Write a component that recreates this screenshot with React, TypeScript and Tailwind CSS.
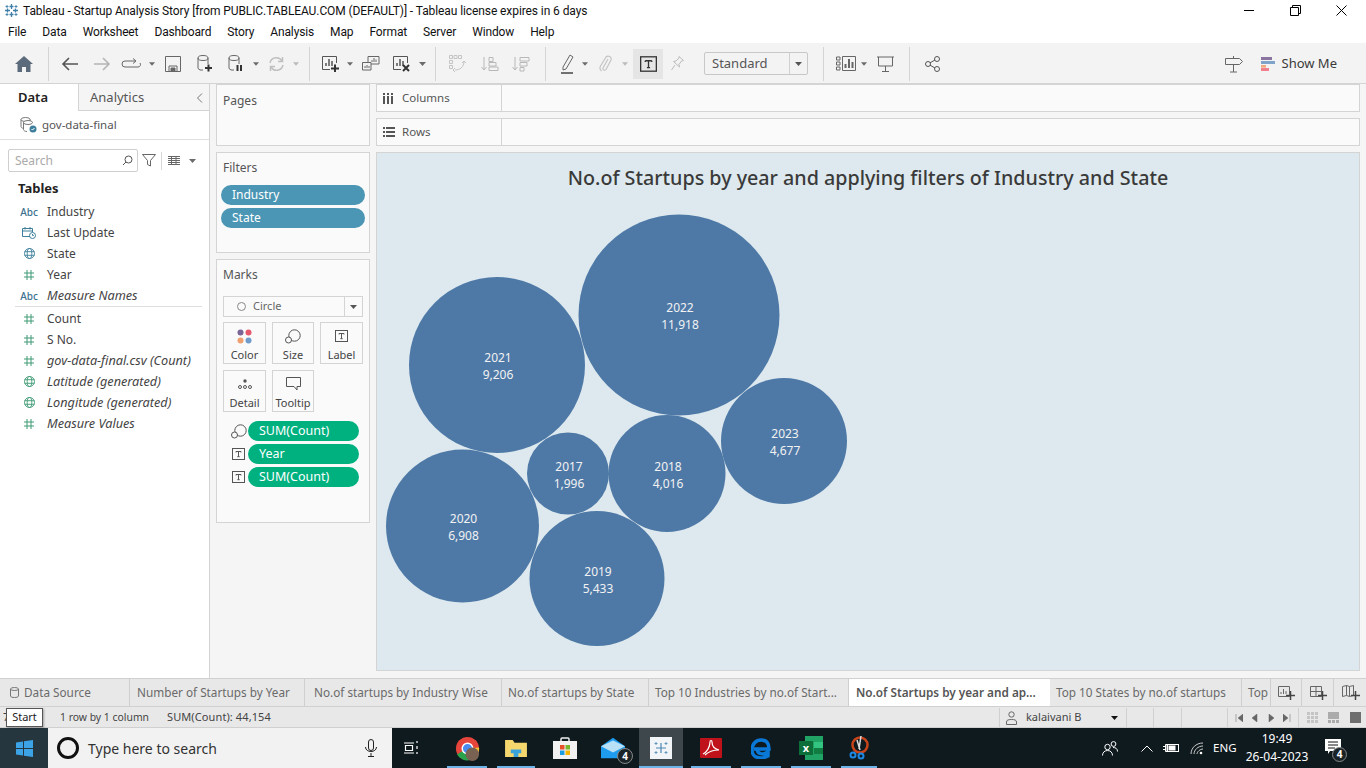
import React from 'react';

const FONT = "font-['Noto_Sans',sans-serif]";

const Caret = ({ color = '#6b6b6b' }: { color?: string }) => (
  <svg width="7" height="4" viewBox="0 0 7 4"><path d="M0 0h7L3.5 4z" fill={color} /></svg>
);

const Cell = ({ className, children }: { className: string; children?: React.ReactNode }) => (
  <div className={`flex flex-none items-center justify-center ${className}`}>{children}</div>
);

const Sep = () => <div className="h-[34px] w-px flex-none bg-[#d4d4d4]" />;

const TBox = ({ size = 13, color = '#555' }: { size?: number; color?: string }) => (
  <svg width={size} height={size - 1} viewBox="0 0 13 12" fill="none">
    <rect x="0.5" y="0.5" width="12" height="11" stroke={color} />
    <path d="M4 3.5h5M6.5 3.5v5.2M5.3 8.7h2.4M4 3.5v1M9 3.5v1" stroke={color} />
  </svg>
);

const SizeIcon = ({ color = '#555' }: { color?: string }) => (
  <svg width="16" height="15" viewBox="0 0 16 15" fill="none">
    <circle cx="9.5" cy="6.5" r="5.7" stroke={color} />
    <circle cx="3.5" cy="11" r="3" fill="#fafafa" stroke={color} />
  </svg>
);

const Hash = ({ color = '#3f9a74' }: { color?: string }) => (
  <svg width="10" height="10" viewBox="0 0 10 10" fill="none" stroke={color}>
    <path d="M3 0v10M7 0v10M0 3h10M0 7h10" />
  </svg>
);

const Globe = ({ color = '#3d7f9c' }: { color?: string }) => (
  <svg width="11" height="11" viewBox="0 0 11 11" fill="none" stroke={color} strokeWidth="0.9">
    <circle cx="5.5" cy="5.5" r="5" />
    <ellipse cx="5.5" cy="5.5" rx="2.3" ry="5" />
    <path d="M0.6 3.7h9.8M0.6 7.3h9.8" />
  </svg>
);

const Abc = () => <span className="text-[10px] font-medium leading-none text-[#3d7290]">Abc</span>;

const Cal = () => (
  <svg width="14" height="13" viewBox="0 0 14 13" fill="none" stroke="#3d7f9c">
    <path d="M8 10.5H.5v-8h10V6M.5 5h10M3 1v2.5M8 1v2.5" />
    <circle cx="10.5" cy="9.5" r="3" />
    <path d="M10.5 8v1.5h1.3" />
  </svg>
);

const fields: { icon: React.ReactNode; label: string; italic?: boolean; divider?: boolean }[] = [
  { icon: <Abc />, label: 'Industry' },
  { icon: <Cal />, label: 'Last Update' },
  { icon: <Globe />, label: 'State' },
  { icon: <Hash />, label: 'Year' },
  { icon: <Abc />, label: 'Measure Names', italic: true, divider: true },
  { icon: <Hash />, label: 'Count' },
  { icon: <Hash />, label: 'S No.' },
  { icon: <Hash />, label: 'gov-data-final.csv (Count)', italic: true },
  { icon: <Globe color="#3f9a74" />, label: 'Latitude (generated)', italic: true },
  { icon: <Globe color="#3f9a74" />, label: 'Longitude (generated)', italic: true },
  { icon: <Hash />, label: 'Measure Values', italic: true },
];

const bubbles = [
  { year: '2022', value: '11,918', cx: 679, cy: 315, r: 100.5 },
  { year: '2021', value: '9,206', cx: 497, cy: 365, r: 88 },
  { year: '2023', value: '4,677', cx: 784, cy: 441, r: 63 },
  { year: '2018', value: '4,016', cx: 667, cy: 473.5, r: 58.5 },
  { year: '2017', value: '1,996', cx: 568, cy: 473.5, r: 41 },
  { year: '2020', value: '6,908', cx: 462.5, cy: 526, r: 76.5 },
  { year: '2019', value: '5,433', cx: 597, cy: 578.5, r: 67.5 },
];

const TitleBar = () => (
  <div className="flex h-[21px] flex-none items-center bg-white">
    <Cell className="ml-[3px] w-[16px]">
      <svg width="15" height="15" viewBox="0 0 15 15" stroke="#3f7fa8" strokeWidth="1.3">
        <path d="M7.5 1v5M5.500 3.500h4M7.500 9v5M5.500 11.500h4M1 7.500h5M3.500 5.500v4M9 7.500h5M11.500 5.500v4" />
        <path d="M3 2v3M1.500 3.500h3M12 2v3M10.500 3.500h3M3 10v3M1.500 11.500h3M12 10v3M10.500 11.500h3" strokeWidth="0.9" />
      </svg>
    </Cell>
    <span className="ml-[4px] font-['Roboto',sans-serif] text-[12px] tracking-[-0.09px] text-[#111]">
      Tableau - Startup Analysis Story [from PUBLIC.TABLEAU.COM (DEFAULT)] - Tableau license expires in 6 days
    </span>
    <div className="ml-auto mr-[2px] flex h-full items-center">
      <Cell className="w-[46px]"><div className="h-px w-[10px] bg-black" /></Cell>
      <Cell className="w-[46px]">
        <svg width="11" height="11" viewBox="0 0 11 11" fill="none" stroke="#000"><path d="M.5 2.5h8v8h-8zM2.5 2.5v-2h8v8h-2" /></svg>
      </Cell>
      <Cell className="w-[46px]">
        <svg width="11" height="11" viewBox="0 0 11 11" stroke="#000"><path d="M.5.5l10 10M10.5.5l-10 10" /></svg>
      </Cell>
    </div>
  </div>
);

const MenuBar = () => (
  <div className="flex h-[22px] flex-none items-center gap-[16px] bg-white pl-[8px] font-['Roboto',sans-serif] text-[12px] tracking-[-0.13px] text-[#111]">
    {['File', 'Data', 'Worksheet', 'Dashboard', 'Story', 'Analysis', 'Map', 'Format', 'Server', 'Window', 'Help'].map((m) => (
      <span key={m}>{m}</span>
    ))}
  </div>
);

const Toolbar = () => (
  <div className="flex h-[41px] flex-none items-center border-b border-[#d4d4d4] bg-[#f3f3f3] pt-[1px]">
    <Cell className="w-[48px]">
      <svg width="18" height="16" viewBox="0 0 18 16"><path d="M9 0L0 8h2.5v8h4.5v-5h4v5h4.500V8H18z" fill="#5b6b7b" /></svg>
    </Cell>
    <Sep />
    <Cell className="w-[42px]">
      <svg width="18" height="14" viewBox="0 0 18 14" fill="none" stroke="#555" strokeWidth="1.6"><path d="M17 7H2M8 1L2 7l6 6" /></svg>
    </Cell>
    <Cell className="w-[22px]">
      <svg width="18" height="14" viewBox="0 0 18 14" fill="none" stroke="#b5b5b5" strokeWidth="1.6"><path d="M1 7h15M10 1l6 6-6 6" /></svg>
    </Cell>
    <Cell className="w-[36px]">
      <svg width="20" height="12" viewBox="0 0 20 12" fill="none" stroke="#666"><path d="M14 3H4a3 3 0 0 0 0 6h13a2.500 2.500 0 0 0 2-4" /><path d="M12 .5L15 3l-3 2.500" /></svg>
    </Cell>
    <Cell className="w-[6px]"><Caret /></Cell>
    <Cell className="w-[36px]">
      <svg width="16" height="16" viewBox="0 0 16 16" fill="none" stroke="#666"><path d="M.5.5h15v15H.5z" /><path d="M4 15.500V10h8v5.500" /><path d="M6 12h4v3H6z" fill="#666" /></svg>
    </Cell>
    <Cell className="w-[28px]">
      <svg width="16" height="17" viewBox="0 0 16 17" fill="none" stroke="#666"><ellipse cx="6" cy="3" rx="5" ry="2.500" /><path d="M1 3v10.500l2 1.500h3M11 3v6" /><path d="M8 13h7M11.500 9.500v7" stroke="#333" strokeWidth="2" /></svg>
    </Cell>
    <Cell className="w-[34px]">
      <svg width="16" height="17" viewBox="0 0 16 17" fill="none" stroke="#666"><ellipse cx="6" cy="3" rx="5" ry="2.500" /><path d="M1 3v10.500l2 1.500h3M11 3v6" /><path d="M9.500 10v6M13 10v6" stroke="#333" strokeWidth="2" /></svg>
    </Cell>
    <Cell className="w-[6px]"><Caret /></Cell>
    <Cell className="w-[34px]">
      <svg width="17" height="16" viewBox="0 0 17 16" fill="none" stroke="#c0c0c0" strokeWidth="1.500"><path d="M2 7a6.500 6.500 0 0 1 12-2M15 9a6.500 6.500 0 0 1-12 2" /><path d="M14.500 1v4.500H10M2.500 15v-4.500H7" /></svg>
    </Cell>
    <Cell className="w-[6px]"><Caret color="#bbb" /></Cell>
    <div className="w-[10px] flex-none" />
    <Sep />
    <Cell className="w-[37px] pl-[3px]">
      <svg width="17" height="17" viewBox="0 0 17 17" fill="none" stroke="#555"><path d="M8 14.500H.5v-13h14V8" /><path d="M4 11V8M7 11V4M10 11V6" strokeWidth="1.500" /><path d="M9 13.500h8M13 9.500v7.500" stroke="#333" strokeWidth="2" /></svg>
    </Cell>
    <Cell className="w-[6px]"><Caret /></Cell>
    <Cell className="w-[36px]">
      <svg width="18" height="17" viewBox="0 0 18 17" fill="none" stroke="#666"><path d="M6 10V1.500h11V9H9" /><path d="M10 7V5M12 7V3M14 7V4.500" /><path d="M.5 7.500H9V15H.5z" fill="#f3f3f3" /><path d="M3 13v-2M5 13V10M7 13v-2" /></svg>
    </Cell>
    <Cell className="w-[26px]">
      <svg width="18" height="17" viewBox="0 0 18 17" fill="none" stroke="#555"><path d="M8 14.500H.5v-13h14V8" /><path d="M4 11V8M7 11V4M10 11V6" strokeWidth="1.500" /><path d="M10 10l6 6M16 10l-6 6" stroke="#333" strokeWidth="2" /></svg>
    </Cell>
    <Cell className="w-[14px]"><Caret /></Cell>
    <div className="w-[6px] flex-none" />
    <Sep />
    <Cell className="w-[42px]">
      <svg width="17" height="17" viewBox="0 0 17 17" fill="none" stroke="#c4c4c4"><path d="M.5.5h3v3h-3zM5 .5h3v3H5zM9.500.5h3v3h-3zM.5 5.500h3v3h-3zM.5 10.500h3v3h-3z" /><path d="M6 15c5 0 9-3 9-9M13 8l2-2 2 2M6 13l-2 2 2 2" /></svg>
    </Cell>
    <Cell className="w-[24px]">
      <svg width="18" height="16" viewBox="0 0 18 16" fill="none" stroke="#b8b8b8"><path d="M3 1v13M.5 11L3 14l2.500-3" /><path d="M8 1.500h4v4H8zM8 6.500h7v3.500H8zM8 11h9v3.500H8z" /></svg>
    </Cell>
    <Cell className="w-[38px]">
      <svg width="18" height="16" viewBox="0 0 18 16" fill="none" stroke="#b8b8b8"><path d="M3 1v13M.5 11L3 14l2.500-3" /><path d="M8 1.500h9V5H8zM8 6.500h7V10H8zM8 11.500h4v3.500H8z" /></svg>
    </Cell>
    <div className="w-[5px] flex-none" />
    <Sep />
    <Cell className="w-[36px] pl-[8px]">
      <svg width="14" height="20" viewBox="0 0 14 20" fill="none" stroke="#666"><path d="M2 13L9 1l3 2-7 12-3 1z" /><path d="M0 19h12" stroke="#444" strokeWidth="1.500" /></svg>
    </Cell>
    <Cell className="w-[6px]"><Caret /></Cell>
    <Cell className="w-[34px]">
      <svg width="13" height="17" viewBox="0 0 13 17" fill="none" stroke="#c4c4c4"><path d="M9 4L4 13a1.700 1.700 0 0 0 3 1.500L12 5a3 3 0 0 0-5-3L1.500 11a4 4 0 0 0 1 5" strokeWidth="1.200" /></svg>
    </Cell>
    <Cell className="w-[6px]"><Caret color="#bbb" /></Cell>
    <Cell className="ml-[5px] h-[30px] w-[30px] bg-[#e5e5e5]"><TBox size={17} color="#333" /></Cell>
    <Cell className="w-[28px]">
      <svg width="13" height="15" viewBox="0 0 13 15" fill="none" stroke="#bbb"><path d="M8 .5l4.500 4-2 .5-2.500 3.500.5 2.500-6-5.500 2.500-.5 3-3zM4 9l-3.500 5" /></svg>
    </Cell>
    <div className="ml-[13px] flex h-[23px] w-[104px] flex-none items-center rounded-[2px] border border-[#c8c8c8] pl-[7px] text-[13px] text-[#555]">
      <span className="flex-1">Standard</span>
      <div className="flex h-full w-[18px] items-center justify-center border-l border-[#d0d0d0]"><Caret color="#555" /></div>
    </div>
    <div className="w-[15px] flex-none" />
    <Sep />
    <Cell className="ml-[12px] w-[20px]">
      <svg width="20" height="15" viewBox="0 0 20 15" fill="none" stroke="#666"><path d="M.5 1h3.500v3H.500zM.5 6h3.500v3H.500zM.5 11h3.500v3H.500zM6.500.5h13v14h-13z" /><path d="M9.500 12V8M13 12V3M16.500 12V6" strokeWidth="2" /></svg>
    </Cell>
    <Cell className="ml-[5px] w-[6px]"><Caret /></Cell>
    <Cell className="ml-[8px] w-[20px]">
      <svg width="17" height="16" viewBox="0 0 17 16" fill="none" stroke="#666"><path d="M0 1h17M1.500 1v9h14V1M8.500 10v5M5 15.500h7" /></svg>
    </Cell>
    <div className="w-[14px] flex-none" />
    <Sep />
    <Cell className="ml-[13px] w-[18px]">
      <svg width="15" height="16" viewBox="0 0 15 16" fill="none" stroke="#555"><circle cx="3" cy="8" r="2.500" /><circle cx="12" cy="3" r="2.500" /><circle cx="12" cy="13" r="2.500" /><path d="M5 6.800l5-2.800M5 9.200l5 2.800" /></svg>
    </Cell>
    <div className="ml-auto flex items-center">
      <svg width="18" height="18" viewBox="0 0 18 18" fill="none" stroke="#666"><path d="M.5 3.500h14l3 3-3 3H.5zM8.500 1v2.500M8.500 9.500V17M5 17h7" /></svg>
      <svg width="14" height="14" viewBox="0 0 14 14" className="ml-[18px]">
        <rect y="0" width="11" height="3" fill="#8a75a0" />
        <rect y="4" width="14" height="3" fill="#7fa3c9" />
        <rect y="8" width="5" height="2.600" fill="#f0a87c" />
        <rect y="11" width="8" height="3" fill="#f2808b" />
      </svg>
      <span className="ml-[7px] mr-[29px] text-[13px] text-[#3a3a3a]">Show Me</span>
    </div>
  </div>
);

const Pill = ({ label, kind }: { label: string; kind: 'filter' | 'mark' }) => (
  <div
    className={
      kind === 'filter'
        ? 'flex h-[20px] w-[144px] items-center rounded-full bg-[#4b96b4] pl-[11px] text-[12px] text-white'
        : 'flex h-[20px] w-[111px] items-center rounded-full bg-[#00b180] pl-[11px] text-[12.5px] text-white'
    }
  >
    {label}
  </div>
);

const MarkButton = ({ icon, label }: { icon: React.ReactNode; label: string }) => (
  <div className="flex h-[42px] flex-col items-center border border-[#d4d4d4] pt-[5px]">
    <div className="flex h-[16px] items-center">{icon}</div>
    <span className="mt-[4px] text-[11px] leading-[14px] text-[#444]">{label}</span>
  </div>
);

const DataPane = () => (
  <aside className="flex w-[210px] flex-none flex-col border-r border-[#d4d4d4] bg-white">
    <div className="flex h-[27px] flex-none">
      <div className="flex w-[78px] items-center pl-[18px] text-[13px] font-semibold text-[#222]">Data</div>
      <div className="flex flex-1 items-center border-b border-l border-[#d4d4d4] bg-[#f5f5f5] pl-[11px] pt-[1px] text-[13px] text-[#555]">
        Analytics
        <svg width="7" height="10" viewBox="0 0 7 10" fill="none" stroke="#777" className="ml-auto mr-[6px]"><path d="M6 .5L1.500 5 6 9.500" /></svg>
      </div>
    </div>
    <div className="flex h-[29px] flex-none items-center border-b border-[#e0e0e0] pl-[20px]">
      <svg width="17" height="16" viewBox="0 0 17 16" fill="none" stroke="#777">
        <ellipse cx="5.500" cy="2.500" rx="4.500" ry="2" />
        <path d="M1 2.500v7c0 1 1 1.700 3 2M10 2.500v2" />
        <ellipse cx="8" cy="5.500" rx="4.500" ry="2" fill="#fff" />
        <path d="M3.500 5.500v7c0 1 1.500 2 3.500 2" />
        <circle cx="13" cy="12" r="3.500" fill="#3d7f9c" stroke="none" />
        <path d="M11.500 12l1 1 2-2" stroke="#fff" />
      </svg>
      <span className="ml-[5px] text-[11.500px] text-[#555]">gov-data-final</span>
    </div>
    <div className="flex flex-none items-center pl-[8px] pt-[9px]">
      <div className="flex h-[23px] w-[130px] items-center rounded-[2px] border border-[#cfcfcf] pl-[6px] pr-[4px] text-[12px] text-[#aaa]">
        <span className="flex-1">Search</span>
        <svg width="11" height="11" viewBox="0 0 11 11" fill="none" stroke="#555"><circle cx="6.500" cy="4.500" r="3.500" /><path d="M4 7l-3 3" /></svg>
      </div>
      <svg width="14" height="13" viewBox="0 0 14 13" fill="none" stroke="#666" className="ml-[4px]"><path d="M.5.5h13L8.500 6.500V12l-3-1.500v-4z" /></svg>
      <div className="ml-[5px] h-[18px] w-px bg-[#d8d8d8]" />
      <svg width="12" height="9" viewBox="0 0 12 9" stroke="#666" className="ml-[6px]"><path d="M0 .5h12M0 2.500h12M0 4.500h12M0 6.500h12M0 8.500h12M3.500 0v9M8 0v9" /></svg>
      <div className="ml-[9px]"><Caret /></div>
    </div>
    <div className="ml-[18px] mt-[7px] text-[13px] font-bold leading-[18px] text-[#222]">Tables</div>
    <div className="mt-[4px]">
      {fields.map((f) => (
        <React.Fragment key={f.label}>
          <div className="flex h-[21px] items-center">
            <div className="flex w-[47px] flex-none items-center justify-center pl-[11px]">{f.icon}</div>
            <span className={f.italic ? 'text-[12.7px] italic text-[#444]' : 'text-[12px] text-[#444]'}>{f.label}</span>
          </div>
          {f.divider && <div className="ml-[15px] mr-[7px] mb-[1px] h-px bg-[#dedede]" />}
        </React.Fragment>
      ))}
    </div>
  </aside>
);

const Cards = () => (
  <div className="ml-[6px] flex w-[154px] flex-none flex-col gap-[6px]">
    <div className="h-[62px] border border-[#d4d4d4] bg-[#fafafa] pl-[6px] pt-[7px] text-[12px] text-[#555]">Pages</div>
    <div className="h-[101px] border border-[#d4d4d4] bg-[#fafafa] px-[4px] pt-[7px]">
      <div className="pl-[2px] text-[12px] leading-[16px] text-[#555]">Filters</div>
      <div className="mt-[9px] flex flex-col gap-[3px]">
        <Pill label="Industry" kind="filter" />
        <Pill label="State" kind="filter" />
      </div>
    </div>
    <div className="h-[264px] border border-[#d4d4d4] bg-[#fafafa] px-[6px] pt-[7px]">
      <div className="text-[12px] leading-[16px] text-[#555]">Marks</div>
      <div className="mt-[13px] flex h-[21px] w-[140px] items-center border border-[#d4d4d4] pl-[13px] text-[11px] text-[#666]">
        <div className="h-[9px] w-[9px] rounded-full border border-[#888]" />
        <span className="ml-[7px] flex-1">Circle</span>
        <div className="flex h-full w-[18px] items-center justify-center border-l border-[#d4d4d4]"><Caret color="#555" /></div>
      </div>
      <div className="mt-[5px] grid grid-cols-[43px_42px_43px] gap-x-[6px] gap-y-[6px]">
        <MarkButton
          label="Color"
          icon={
            <svg width="15" height="15" viewBox="0 0 15 15">
              <circle cx="3.500" cy="3.500" r="3" fill="#7b6496" />
              <circle cx="11.500" cy="3.500" r="3" fill="#e6586b" />
              <circle cx="3.500" cy="11.500" r="3" fill="#f0a070" />
              <circle cx="11.500" cy="11.500" r="3" fill="#6f9ccb" />
            </svg>
          }
        />
        <MarkButton label="Size" icon={<SizeIcon />} />
        <MarkButton label="Label" icon={<TBox />} />
        <MarkButton
          label="Detail"
          icon={
            <svg width="14" height="10" viewBox="0 0 14 10" fill="none" stroke="#555">
              <circle cx="7" cy="2" r="1.700" fill="#555" stroke="none" />
              <circle cx="2" cy="8" r="1.500" /><circle cx="7" cy="8" r="1.500" /><circle cx="12" cy="8" r="1.500" />
            </svg>
          }
        />
        <MarkButton
          label="Tooltip"
          icon={
            <svg width="15" height="14" viewBox="0 0 15 14" fill="none" stroke="#555"><path d="M.5.5h14v9H11V13L8 9.500H.5z" /></svg>
          }
        />
      </div>
      <div className="ml-[6px] mt-[9px] flex flex-col gap-[3px]">
        {[
          { icon: <SizeIcon />, label: 'SUM(Count)' },
          { icon: <TBox />, label: 'Year' },
          { icon: <TBox />, label: 'SUM(Count)' },
        ].map((p, i) => (
          <div key={i} className="flex items-center">
            <div className="flex w-[19px] flex-none items-center justify-center">{p.icon}</div>
            <Pill label={p.label} kind="mark" />
          </div>
        ))}
      </div>
    </div>
  </div>
);

const Shelf = ({ icon, label }: { icon: React.ReactNode; label: string }) => (
  <div className="flex h-[28px] border border-[#d4d4d4] bg-[#fafafa]">
    <div className="flex w-[125px] flex-none items-center border-r border-[#d4d4d4] pl-[6px] text-[11.500px] text-[#555]">
      <div className="flex w-[19px] flex-none">{icon}</div>
      {label}
    </div>
  </div>
);

const View = () => (
  <div className="ml-[6px] flex w-[984px] flex-none flex-col">
    <Shelf
      label="Columns"
      icon={
        <svg width="10" height="11" viewBox="0 0 10 11" fill="#555">
          <rect y="0" width="2" height="2" /><rect x="4" y="0" width="2" height="2" /><rect x="8" y="0" width="2" height="2" />
          <rect y="3" width="2" height="8" /><rect x="4" y="3" width="2" height="8" /><rect x="8" y="3" width="2" height="8" />
        </svg>
      }
    />
    <div className="h-[6px]" />
    <Shelf
      label="Rows"
      icon={<svg width="12" height="10" viewBox="0 0 12 10" fill="#555"><rect width="2" height="2" /><rect x="3" width="9" height="2" /><rect y="4" width="2" height="2" /><rect x="3" y="4" width="9" height="2" /><rect y="8" width="2" height="2" /><rect x="3" y="8" width="9" height="2" /></svg>}
    />
    <div className="h-[6px]" />
    <div className="flex h-[519px] flex-col overflow-hidden border border-[#d4d4d4] bg-[#dde9ee]">
      <svg width="982" height="517" viewBox="377 153 982 517">
        <text x="868" y="185" textAnchor="middle" fontSize="19.7" fontWeight="500" fill="#3a3a3a" fontFamily="'Noto Sans', sans-serif">
          No.of Startups by year and applying filters of Industry and State
        </text>
        {bubbles.map((b) => (
          <g key={b.year}>
            <circle cx={b.cx} cy={b.cy} r={b.r} fill="#4e79a7" />
            <text x={b.cx + 1} y={b.cy - 3} textAnchor="middle" fontSize="12" fill="#f2f2f2" fontFamily="'Noto Sans', sans-serif">{b.year}</text>
            <text x={b.cx + 1} y={b.cy + 14} textAnchor="middle" fontSize="12" fill="#f2f2f2" fontFamily="'Noto Sans', sans-serif">{b.value}</text>
          </g>
        ))}
      </svg>
    </div>
  </div>
);

const tabs = [
  { label: 'Number of Startups by Year', w: 'w-[175px] pl-[7px]' },
  { label: 'No.of startups by Industry Wise', w: 'w-[197px] pl-[9px]' },
  { label: 'No.of startups by State', w: 'w-[147px] pl-[6px]' },
  { label: 'Top 10 Industries by no.of Start...', w: 'w-[200px] pl-[6px]' },
  { label: 'No.of Startups by year and ap...', w: 'w-[201px] pl-[7px]', active: true },
  { label: 'Top 10 States by no.of startups', w: 'w-[192px] pl-[6px]' },
];

const TabAdd = ({ children, w }: { children: React.ReactNode; w: string }) => (
  <div className={`relative flex h-full flex-none items-center justify-center border-l border-[#cfcfcf] ${w}`}>
    {children}
    <svg width="9" height="9" viewBox="0 0 9 9" stroke="#444" strokeWidth="1.500" className="absolute bottom-[6px] right-[6px]"><path d="M0 4.500h9M4.500 0v9" /></svg>
  </div>
);

const TabBar = () => (
  <div className="flex h-[29px] flex-none border-y border-[#d0d0d0] bg-[#e8e8e8] text-[11.75px] text-[#6a6a6a]">
    <div className="flex w-[130px] flex-none items-center border-r border-[#cfcfcf] pl-[10px]">
      <svg width="9" height="11" viewBox="0 0 9 11" fill="none" stroke="#777"><ellipse cx="4.500" cy="2" rx="4" ry="1.500" /><path d="M.5 2v7c0 2 8 2 8 0V2" /></svg>
      <span className="ml-[5px]">Data Source</span>
    </div>
    {tabs.map((t) => (
      <div
        key={t.label}
        className={`flex flex-none items-center overflow-hidden whitespace-nowrap ${t.w} ${
          t.active ? 'bg-white font-semibold text-[#555]' : 'border-r border-[#cfcfcf]'
        }`}
      >
        {t.label}
      </div>
    ))}
    <div className="flex w-[28px] flex-none items-center overflow-hidden pl-[6px]">Top</div>
    <TabAdd w="w-[31px]">
      <svg width="12" height="11" viewBox="0 0 12 11" fill="none" stroke="#666" className="mb-[3px] mr-[4px]"><path d="M.5.500h11v10H.5z" /><path d="M3 8V6M5.500 8V3M8 8V5" /></svg>
    </TabAdd>
    <TabAdd w="w-[32px]">
      <svg width="12" height="11" viewBox="0 0 12 11" fill="none" stroke="#666" className="mb-[3px] mr-[4px]"><path d="M.5.500h11v10H.5zM6 .5v10M.5 5.500h11" /></svg>
    </TabAdd>
    <TabAdd w="w-[33px]">
      <svg width="12" height="12" viewBox="0 0 12 12" fill="none" stroke="#666" className="mb-[3px] mr-[4px]"><path d="M.5 1.500l4-1 3 1 4-1v10l-4 1-3-1-4 1zM4.500.5v10M7.500 1.500v10" /></svg>
    </TabAdd>
  </div>
);

const StatusBar = () => (
  <div className="relative flex h-[21px] flex-none items-center border-b border-[#d0d0d0] bg-[#e8e8e8] pt-[1px] text-[11px] text-[#444]">
    <span className="absolute left-[3px] w-[3px] overflow-hidden">7</span>
    <span className="ml-[60px] text-[10.4px]">1 row by 1 column</span>
    <span className="ml-[18px] tracking-[0.1px]">SUM(Count): 44,154</span>
    <div className="ml-auto flex h-full">
      <div className="flex w-[127px] items-center border-l border-[#d0d0d0] pl-[6px]">
        <svg width="11" height="14" viewBox="0 0 11 14" fill="none" stroke="#666"><circle cx="5.500" cy="3.500" r="2.700" /><path d="M.5 13.500V11c0-2 2-2.500 5-2.500s5 .5 5 2.500v2.500z" /></svg>
        <span className="ml-[9px] flex-1">kalaivani B</span>
        <div className="mr-[8px]"><Caret color="#111" /></div>
      </div>
      <div className="w-[27px] border-l border-[#d0d0d0]" />
      <div className="w-[28px] border-l border-[#d0d0d0]" />
      <div className="w-[46px] border-l border-[#d0d0d0]" />
      <div className="flex w-[71px] items-center justify-around border-l border-[#d0d0d0] px-[3px]">
        {['M1 0v8M8 0v8L3 4z', 'M6 0v8L1 4z', 'M2 0v8l5-4z', 'M7 0v8M0 0v8l5-4z'].map((d) => (
          <svg key={d} width="8" height="8" viewBox="0 0 8 8" fill="#666" stroke="#666" strokeWidth="0.5"><path d={d} /></svg>
        ))}
      </div>
      <div className="flex w-[68px] items-center justify-around border-l border-[#d0d0d0] pl-[3px]">
        <svg width="11" height="11" viewBox="0 0 11 11" fill="#c4c4c4"><path d="M0 0h3v3H0zM4 0h3v3H4zM8 0h3v3H8zM0 4h3v3H0zM4 4h3v3H4zM8 4h3v3H8zM0 8h3v3H0zM4 8h3v3H4zM8 8h3v3H8z" /></svg>
        <svg width="11" height="11" viewBox="0 0 11 11" fill="#ababab"><path d="M0 0h11v7H0zM0 8h3v3H0zM4 8h3v3H4zM8 8h3v3H8z" /></svg>
        <div className="h-[11px] w-[11px] bg-[#6e6e6e]" />
      </div>
    </div>
    <div className="absolute left-[6px] top-[1px] flex h-[19px] w-[37px] items-center justify-center border border-[#555] bg-white text-[11px] text-[#222] shadow-[1px_1px_2px_rgba(0,0,0,0.3)]">
      Start
    </div>
  </div>
);

const TaskIcon = ({ w, active, children }: { w: string; active?: boolean; children: React.ReactNode }) => (
  <div className={`relative flex h-full flex-none items-center justify-center ${w}`}>
    {children}
    {active && <div className="absolute bottom-0 left-[5px] right-[5px] h-[2px] bg-[#6db3e8]" />}
  </div>
);

const Taskbar = () => (
  <div className="flex h-[40px] flex-none items-center bg-[#0f1a1f] text-white">
    <div className="flex h-full w-[48px] flex-none items-center justify-center bg-[#25363f]">
      <svg width="17" height="17" viewBox="0 0 17 17" fill="#3ba3e6"><path d="M0 2.500L7 1.500V8H0zM8 1.300L17 0v8H8zM0 9h7v6.500L0 14.500zM8 9h9v8l-9-1.300z" /></svg>
    </div>
    <div className="flex h-full w-[344px] flex-none items-center bg-[#f2f2f2] pl-[9px] text-[#222]">
      <div className="h-[22px] w-[22px] rounded-full border-[3px] border-[#111]" />
      <span className="ml-[9px] flex-1 pt-[1px] text-[14px] text-[#333]">Type here to search</span>
      <svg width="12" height="18" viewBox="0 0 12 18" fill="none" stroke="#222" className="mr-[15px]"><rect x="3.500" y=".5" width="5" height="11" rx="2.500" /><path d="M.5 8c0 6 11 6 11 0M6 14v3M3 17.500h6" /></svg>
    </div>
    <TaskIcon w="w-[38px]">
      <svg width="16" height="16" viewBox="0 0 16 16" fill="none" stroke="#fff"><path d="M1 3h10M1 13h10M2.500 5.500h7v5h-7zM14 1v2M14 6v3M14 12v2" strokeWidth="1.200" /></svg>
    </TaskIcon>
    <div className="w-[12px] flex-none" />
    <TaskIcon w="w-[50px]" active>
      <svg width="25" height="25" viewBox="0 0 26 26">
        <circle cx="13" cy="13" r="12" fill="#e5453a" />
        <path d="M13 13L2 19a12 12 0 0 0 14 6z" fill="#2ba24c" />
        <path d="M13 13l3 12a12 12 0 0 0 9-13z" fill="#f7c533" />
        <circle cx="13" cy="13" r="5.500" fill="#4a8bf0" stroke="#fff" strokeWidth="1.500" />
        <circle cx="18" cy="19" r="7" fill="#7a6253" />
      </svg>
    </TaskIcon>
    <TaskIcon w="w-[48px]" active>
      <svg width="22" height="19" viewBox="0 0 23 20"><path d="M0 1h8l2 3h13v15H0z" fill="#f5d76e" /><path d="M6 11h11v4h-3v4H9v-4H6z" fill="#3ba3dc" /></svg>
    </TaskIcon>
    <TaskIcon w="w-[49px]">
      <svg width="24" height="24" viewBox="0 0 24 24"><path d="M8 6V3a1 1 0 0 1 1-1h6a1 1 0 0 1 1 1v3" fill="none" stroke="#eee" strokeWidth="1.500" /><rect y="5" width="24" height="18" fill="#f2f2f2" /><rect x="7" y="9" width="4.500" height="4.500" fill="#e8502a" /><rect x="12.500" y="9" width="4.500" height="4.500" fill="#79b82b" /><rect x="7" y="14.500" width="4.500" height="4.500" fill="#1f9be0" /><rect x="12.500" y="14.500" width="4.500" height="4.500" fill="#f7b500" /></svg>
    </TaskIcon>
    <TaskIcon w="w-[50px]">
      <div className="relative h-[22px] w-[26px]">
        <svg width="24" height="22" viewBox="0 0 26 22"><path d="M0 9L13 0l13 9v13H0z" fill="#1d9cf0" /><path d="M0 9l13 7 13-7-13-6z" fill="#b8e0f7" /></svg>
        <div className="absolute bottom-[-5px] right-[-6px] flex h-[16px] w-[16px] items-center justify-center rounded-full border border-[#888] bg-[#1a2428] text-[10px] font-bold">4</div>
      </div>
    </TaskIcon>
    <div className="relative flex h-full w-[44px] flex-none items-center justify-center bg-[#3e474c]">
      <div className="flex h-[22px] w-[22px] items-center justify-center bg-[#f2f5f7]">
        <svg width="18" height="18" viewBox="0 0 18 18" stroke="#4a87b3" strokeWidth="1.200"><path d="M9 4v10M4 9h10" /><path d="M4 3v3M2.500 4.500h3M14 3v3M12.500 4.500h3M4 12v3M2.500 13.500h3M14 12v3M12.500 13.500h3" strokeWidth="0.800" /></svg>
      </div>
      <div className="absolute bottom-0 left-0 right-0 h-[2px] bg-[#6db3e8]" />
    </div>
    <div className="w-[3px] flex-none" />
    <TaskIcon w="w-[50px]" active>
      <svg width="22" height="20" viewBox="0 0 22 20"><rect width="22" height="20" rx="1" fill="#c0121a" /><path d="M3 16c4-2 7-7 7-12 0-2 2-2 2 0 0 4 3 7 7 8-5 0-10 1-14 5" fill="none" stroke="#fff" strokeWidth="1.200" /></svg>
    </TaskIcon>
    <TaskIcon w="w-[50px]" active>
      <svg width="21" height="21" viewBox="0 0 21 21" fill="none"><path d="M3 11h15c0-6-3-9-8-9S1 6 1 12c0 6 5 8 9 8 3 0 5-1 7-2v-4c-3 2-10 4-11-3" stroke="#0a78d7" strokeWidth="3.500" /></svg>
    </TaskIcon>
    <TaskIcon w="w-[50px]" active>
      <svg width="24" height="24" viewBox="0 0 24 24"><rect x="6" width="18" height="24" fill="#21a366" /><rect x="15" y="6" width="9" height="6" fill="#33c481" /><rect x="15" y="12" width="9" height="6" fill="#107c41" /><rect y="5" width="14" height="14" fill="#0e6e3a" /><text x="7" y="16" textAnchor="middle" fontSize="11" fontWeight="700" fill="#fff" fontFamily="'Noto Sans', sans-serif">x</text></svg>
    </TaskIcon>
    <TaskIcon w="w-[46px]" active>
      <svg width="20" height="24" viewBox="0 0 20 24" fill="none"><circle cx="11" cy="9" r="7.500" stroke="#c8441b" strokeWidth="2.500" /><path d="M12 0l-2 13M8 4l3 10" stroke="#ddd" strokeWidth="1.500" /><circle cx="4" cy="19" r="2.500" stroke="#1e88e5" strokeWidth="2" /><circle cx="12" cy="20" r="2.500" stroke="#1e88e5" strokeWidth="2" /></svg>
    </TaskIcon>
    <div className="ml-auto flex h-full items-center">
      <svg width="16" height="15" viewBox="0 0 16 15" fill="none" stroke="#fff"><circle cx="5.500" cy="6" r="2.700" /><path d="M.5 14.500c0-3 2-5 5-5s5 2 5 5" /><circle cx="11.500" cy="3" r="2.400" /><path d="M11 6.500c2.500 0 4.500 1 4.500 4" /></svg>
      <svg width="12" height="7" viewBox="0 0 12 7" fill="none" stroke="#fff" className="ml-[23px]"><path d="M.5 6.500L6 1l5.500 5.500" /></svg>
      <svg width="16" height="10" viewBox="0 0 16 10" fill="none" stroke="#fff" className="ml-[10px]"><path d="M0 3.500h2M0 6.500h2M2.500 1.500h1.500v7H2.500z" /><rect x="4.500" y="1.500" width="11" height="7" /><rect x="6" y="3" width="6" height="4" fill="#fff" /></svg>
      <svg width="14" height="13" viewBox="0 0 14 13" fill="none" stroke="#ccc" className="ml-[11px]"><path d="M1 12C1 6 6 1 13 1M4 12c0-4 4-8 9-8M7 12c0-2 3-5 6-5" /><circle cx="11" cy="11" r="1.300" fill="#fff" stroke="none" /></svg>
      <span className="ml-[9px] w-[26px] text-[11.5px]">ENG</span>
      <div className="ml-[6px] flex w-[64px] flex-col items-center text-[12px] leading-[18px]">
        <span>19:49</span>
        <span>26-04-2023</span>
      </div>
      <div className="relative ml-[16px] mr-[25px] h-[19px] w-[16px]">
        <svg width="16" height="16" viewBox="0 0 16 16"><path d="M0 0h16v12H5l-2 3v-3H0z" fill="#fff" /><path d="M3 3h10M3 6h10M3 9h7" stroke="#111" /></svg>
        <div className="absolute bottom-[-4px] right-[-6px] flex h-[15px] w-[15px] items-center justify-center rounded-full border border-[#888] bg-[#1a2428] text-[10px] font-bold">4</div>
      </div>
    </div>
  </div>
);

export default function App() {
  return (
    <div className={`flex h-[768px] w-[1366px] flex-col overflow-hidden bg-white ${FONT}`}>
      <TitleBar />
      <MenuBar />
      <Toolbar />
      <div className="flex h-[594px] flex-none bg-[#f5f5f5]">
        <DataPane />
        <Cards />
        <View />
      </div>
      <TabBar />
      <StatusBar />
      <Taskbar />
    </div>
  );
}
